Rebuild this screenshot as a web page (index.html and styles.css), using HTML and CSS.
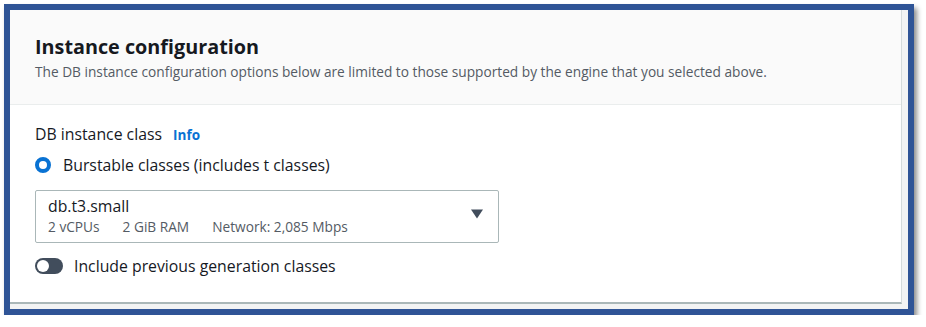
FILE: index.html
```html
<!DOCTYPE html>
<html>
<head>
<meta charset="utf-8">
<link rel="stylesheet" href="styles.css">
</head>
<body>
<div class="frame">
  <div class="card">
    <div class="header">
      <h2 class="title">Instance configuration</h2>
      <p class="desc">The DB instance configuration options below are limited to those supported by the engine that you selected above.</p>
    </div>
    <div class="body">
      <div class="label">DB instance class <span class="info">Info</span></div>
      <div class="radio-row">
        <span class="radio"></span>
        <span class="radio-text">Burstable classes (includes t classes)</span>
      </div>
      <div class="select">
        <div class="select-main">db.t3.small</div>
        <div class="select-meta"><span>2 vCPUs</span><span>2 GiB RAM</span><span>Network: 2,085 Mbps</span></div>
        <svg class="caret" width="12" height="10" viewBox="0 0 12 10"><path d="M0 0.5 L12 0.5 L6 9.5 Z" fill="#414d5c"/></svg>
      </div>
      <div class="toggle-row">
        <span class="toggle"><span class="knob"></span></span>
        <span class="toggle-text">Include previous generation classes</span>
      </div>
    </div>
  </div>
</div>
</body>
</html>
```
FILE: styles.css
```css
* { box-sizing: border-box; }
html, body { margin: 0; padding: 0; background: #ffffff; }
body { font-family: "Open Sans", "Noto Sans", sans-serif; color: #16191f; }
.frame {
  margin: 4px 0 0 4px;
  width: 910px;
  height: 311px;
  border: 6px solid #2f5496;
  background: #f2f3f3;
  padding: 0 6px 5px 0;
  box-shadow: 3px 4px 5px rgba(0,0,0,0.45);
}
.card {
  height: 100%;
  background: #ffffff;
  border-right: 1px solid #d5dbdb;
  border-bottom: 2px solid #aab7b8;
}
.header {
  height: 95px;
  background: #fafafa;
  border-bottom: 1px solid #eaeded;
  padding: 24px 0 0 25px;
}
.title {
  margin: 0;
  font-size: 19.8px;
  font-weight: 700;
  line-height: 26px;
  color: #16191f;
}
.desc {
  margin: 3px 0 0 0;
  font-size: 13.7px;
  line-height: 18px;
  color: #545b64;
}
.body { padding: 18px 0 0 25px; }
.label {
  font-size: 15.8px;
  line-height: 22px;
  color: #16191f;
}
.info {
  font-size: 13.5px;
  font-weight: 700;
  color: #0972d3;
  margin-left: 7px;
}
.radio-row {
  display: flex;
  align-items: center;
  margin-top: 8px;
  height: 22px;
}
.radio {
  width: 16px; height: 16px;
  border-radius: 50%;
  border: 4.5px solid #0972d3;
  background: #fff;
  flex: none;
}
.radio-text { margin-left: 12px; font-size: 15.8px; }
.select {
  position: relative;
  margin-top: 14px;
  width: 464px;
  height: 53px;
  border: 1px solid #aab7b8;
  border-radius: 2px;
  padding: 5px 0 0 12px;
}
.select-main { font-size: 15.8px; line-height: 20px; }
.select-meta {
  display: flex;
  gap: 23px;
  margin-top: 2px;
  font-size: 13.7px;
  line-height: 18px;
  color: #545b64;
}
.caret { position: absolute; right: 15px; top: 18px; }
.toggle-row {
  display: flex;
  align-items: center;
  margin-top: 12px;
  height: 22px;
}
.toggle {
  position: relative;
  width: 28px; height: 16px;
  border-radius: 8px;
  background: #414d5c;
  flex: none;
}
.knob {
  position: absolute;
  left: 2px; top: 2px;
  width: 12px; height: 12px;
  border-radius: 50%;
  background: #fff;
}
.toggle-text { margin-left: 11px; font-size: 15.8px; }
```
